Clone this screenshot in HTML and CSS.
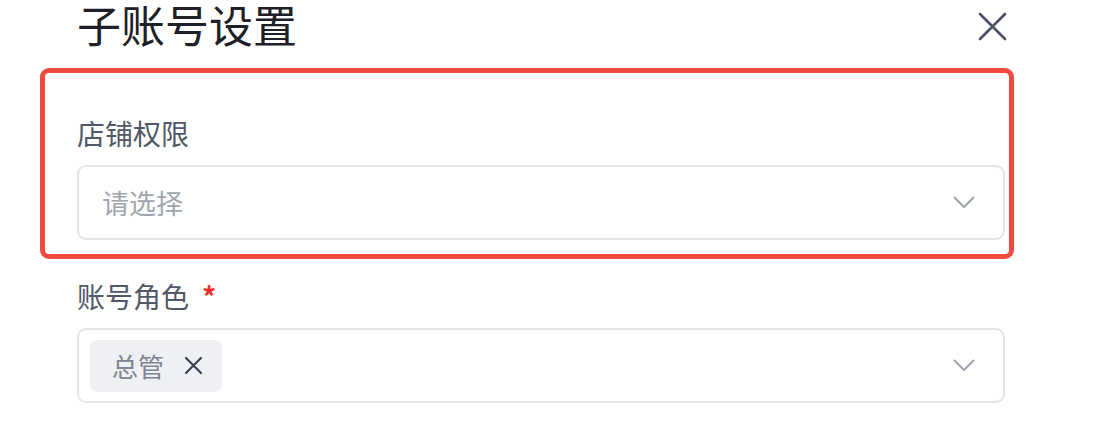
FILE: index.html
```html
<!doctype html>
<html>
<head>
  <meta charset="utf-8">
  <link rel="stylesheet" href="styles.css">
</head>
<body>
  <div class="dialog">
    <header class="dialog-head">
      <h2 class="dialog-title">子账号设置</h2>
      <button class="close" type="button" aria-label="关闭">
        <svg width="29" height="29" viewBox="0 0 29 29"><path d="M2 2L27 27M27 2L2 27" stroke="#4b5261" stroke-width="2.6" stroke-linecap="round"/></svg>
      </button>
    </header>

    <form class="form">
      <div class="field">
        <label class="field-label">店铺权限</label>
        <div class="select">
          <span class="placeholder">请选择</span>
          <svg class="chevron" width="22" height="13" viewBox="0 0 22 13"><path d="M1.5 1.5L11 11L20.5 1.5" fill="none" stroke="#9ea3ad" stroke-width="2" stroke-linecap="round" stroke-linejoin="round"/></svg>
        </div>
      </div>

      <div class="field">
        <label class="field-label">账号角色<span class="required">*</span></label>
        <div class="select">
          <span class="tag">总管
            <svg class="tag-close" width="19" height="19" viewBox="0 0 19 19"><path d="M2 2L17 17M17 2L2 17" stroke="#3b4251" stroke-width="2.2" stroke-linecap="round"/></svg>
          </span>
          <svg class="chevron" width="22" height="13" viewBox="0 0 22 13"><path d="M1.5 1.5L11 11L20.5 1.5" fill="none" stroke="#9ea3ad" stroke-width="2" stroke-linecap="round" stroke-linejoin="round"/></svg>
        </div>
      </div>
    </form>

    <div class="highlight"></div>
  </div>
</body>
</html>
```

FILE: styles.css
```css
html, body {
  margin: 0;
  background: #fff;
  font-family: "Noto Sans CJK SC", "Noto Sans", sans-serif;
}
.dialog {
  position: relative;
  padding: 0 108px 0 77px;
}
.dialog-head {
  display: flex;
  align-items: center;
  justify-content: space-between;
  height: 52px;
  margin-right: -2px;
}
.dialog-title {
  align-self: flex-start;
  margin: 0;
  font-size: 44px;
  line-height: 48px;
  font-weight: 400;
  color: #1d2026;
}
.close {
  display: flex;
  padding: 0;
  border: 0;
  background: none;
}
.form {
  display: flex;
  flex-direction: column;
  gap: 42px;
  padding-top: 67px;
}
.field {
  display: flex;
  flex-direction: column;
  gap: 18px;
}
.field-label {
  font-size: 28px;
  line-height: 28px;
  color: #515866;
}
.required {
  margin-left: 13px;
  font-weight: 700;
  color: #f0312b;
}
.select {
  display: flex;
  align-items: center;
  box-sizing: border-box;
  height: 75px;
  padding: 0 28px 0 11px;
  border: 2px solid #e3e5ea;
  border-radius: 9px;
}
.placeholder {
  flex: 1;
  padding-left: 12px;
  font-size: 27px;
  color: #a0a5ae;
}
.chevron {
  margin-left: auto;
}
.tag {
  display: flex;
  align-items: center;
  gap: 20px;
  height: 52px;
  padding: 0 19px 0 22px;
  border-radius: 8px;
  background: #eff0f4;
  font-size: 26px;
  color: #80858f;
}
.highlight {
  position: absolute;
  left: 40px;
  top: 68px;
  width: 974px;
  height: 191px;
  box-sizing: border-box;
  border: 5px solid #ef4a3e;
  border-radius: 9px;
}
```
